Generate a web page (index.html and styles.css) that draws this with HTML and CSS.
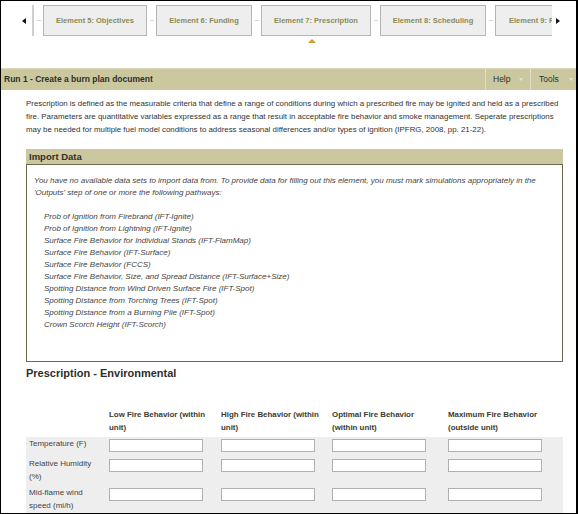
FILE: index.html
```html
<!DOCTYPE html>
<html>
<head>
<meta charset="utf-8">
<link rel="stylesheet" href="styles.css">
</head>
<body>
<div class="frame">
  <div class="tabstrip">
    <span class="arrow-left"></span>
    <span class="vbar"></span>
    <div class="tabs-viewport">
      <span class="dash"></span>
      <div class="tab t5">Element 5: Objectives</div>
      <span class="dash"></span>
      <div class="tab t6">Element 6: Funding</div>
      <span class="dash"></span>
      <div class="tab t7 active">Element 7: Prescription</div>
      <span class="dash"></span>
      <div class="tab t8">Element 8: Scheduling</div>
      <span class="dash"></span>
      <div class="tab t9">Element 9: Public Affairs</div>
    </div>
    <span class="arrow-right"></span>
  </div>

  <div class="runbar">
    <div class="runtitle">Run 1 - Create a burn plan document</div>
    <div class="menu menu-help">Help <span class="caret"></span></div>
    <div class="menu menu-tools">Tools <span class="caret"></span></div>
  </div>

  <div class="content">
    <p class="intro">Prescription is defined as the measurable criteria that define a range of conditions during which a prescribed fire may be ignited and held as a prescribed fire. Parameters are quantitative variables expressed as a range that result in acceptable fire behavior and smoke management. Seperate prescriptions may be needed for multiple fuel model conditions to address seasonal differences and/or types of ignition (IPFRG, 2008, pp. 21-22).</p>

    <div class="import-head">Import Data</div>
    <div class="import-box">
      <p class="import-msg">You have no available data sets to import data from. To provide data for filling out this element, you must mark simulations appropriately in the 'Outputs' step of one or more the following pathways:</p>
      <ul class="pathways">
        <li>Prob of Ignition from Firebrand (IFT-Ignite)</li>
        <li>Prob of Ignition from Lightning (IFT-Ignite)</li>
        <li>Surface Fire Behavior for Individual Stands (IFT-FlamMap)</li>
        <li>Surface Fire Behavior (IFT-Surface)</li>
        <li>Surface Fire Behavior (FCCS)</li>
        <li>Surface Fire Behavior, Size, and Spread Distance (IFT-Surface+Size)</li>
        <li>Spotting Distance from Wind Driven Surface Fire (IFT-Spot)</li>
        <li>Spotting Distance from Torching Trees (IFT-Spot)</li>
        <li>Spotting Distance from a Burning Pile (IFT-Spot)</li>
        <li>Crown Scorch Height (IFT-Scorch)</li>
      </ul>
    </div>

    <h2 class="section-title">Prescription - Environmental</h2>

    <table class="rx">
      <colgroup>
        <col class="c-label"><col class="c-low"><col class="c-high"><col class="c-opt"><col class="c-max">
      </colgroup>
      <thead>
        <tr>
          <th></th>
          <th>Low Fire Behavior (within unit)</th>
          <th>High Fire Behavior (within unit)</th>
          <th>Optimal Fire Behavior (within unit)</th>
          <th>Maximum Fire Behavior (outside unit)</th>
        </tr>
      </thead>
      <tbody>
        <tr>
          <td class="lbl">Temperature (F)</td>
          <td><input type="text"></td>
          <td><input type="text"></td>
          <td><input type="text"></td>
          <td><input type="text"></td>
        </tr>
        <tr>
          <td class="lbl">Relative Humidity (%)</td>
          <td><input type="text"></td>
          <td><input type="text"></td>
          <td><input type="text"></td>
          <td><input type="text"></td>
        </tr>
        <tr>
          <td class="lbl">Mid-flame wind speed (mi/h)</td>
          <td><input type="text"></td>
          <td><input type="text"></td>
          <td><input type="text"></td>
          <td><input type="text"></td>
        </tr>
      </tbody>
    </table>
  </div>
</div>
</body>
</html>
```

FILE: styles.css
```css
html, body {
  margin: 0;
  padding: 0;
  background: #fff;
}

.frame {
  width: 578px;
  height: 514px;
  box-sizing: border-box;
  border: 1px solid #000;
  border-right-width: 2px;
  overflow: hidden;
  font-family: "Liberation Sans", Arial, Helvetica, sans-serif;
  color: #333;
}

/* ---------- tab strip ---------- */
.tabstrip {
  height: 67px;
  box-sizing: border-box;
  padding: 4px 0 0 21px;
  display: flex;
  align-items: flex-start;
}

.arrow-left {
  width: 0;
  height: 0;
  margin-top: 13px;
  border-top: 3px solid transparent;
  border-bottom: 3px solid transparent;
  border-right: 4px solid #111;
}

.vbar {
  width: 2px;
  height: 31px;
  margin-left: 6px;
  background: #cfcfcf;
}

.tabs-viewport {
  width: 518px;
  height: 40px;
  display: flex;
  align-items: flex-start;
  overflow: hidden;
  flex: none;
}

.dash {
  flex: none;
  width: 9px;
  height: 31px;
  position: relative;
}
.dash::before {
  content: "";
  position: absolute;
  left: 3px;
  top: 15px;
  width: 4px;
  height: 1px;
  background: #d6d6d6;
}

.tab {
  flex: none;
  position: relative;
  height: 31px;
  box-sizing: border-box;
  border: 1px solid #b5b5b5;
  background: #eeeeee;
  color: #8c8a58;
  font-weight: bold;
  font-size: 7.5px;
  line-height: 29px;
  text-align: center;
  white-space: nowrap;
  overflow: hidden;
}
.t5 { width: 104px; }
.t6 { width: 96px; }
.t7 { width: 110px; overflow: visible; }
.t8 { width: 106px; }
.t9 { width: 106px; text-align: left; padding-left: 13px; }

.tab.active::after {
  content: "";
  position: absolute;
  left: 50%;
  margin-left: -8px;
  top: 33px;
  width: 0;
  height: 0;
  border-left: 4px solid transparent;
  border-right: 4px solid transparent;
  border-bottom: 4px solid #d39a2a;
}

.arrow-right {
  width: 0;
  height: 0;
  margin-top: 13px;
  margin-left: 4px;
  border-top: 3px solid transparent;
  border-bottom: 3px solid transparent;
  border-left: 4px solid #111;
}

/* ---------- run bar ---------- */
.runbar {
  height: 22px;
  display: flex;
  background: #cbc89f;
  border-top: 1px solid #dcdabb;
  box-sizing: border-box;
}
.runtitle {
  flex: 1;
  padding-left: 3px;
  font-size: 8.5px;
  font-weight: bold;
  line-height: 21px;
  color: #2f2f2a;
}
.menu {
  flex: none;
  box-sizing: border-box;
  border-left: 1px solid #e2e0c6;
  font-size: 8.5px;
  line-height: 21px;
  color: #2f2f2a;
  display: flex;
  align-items: center;
}
.menu-help { width: 45px; padding-left: 7px; }
.menu-tools { width: 46px; padding-left: 8px; }
.caret {
  width: 0;
  height: 0;
  margin-left: 9px;
  border-left: 2.5px solid transparent;
  border-right: 2.5px solid transparent;
  border-top: 3px solid #e6e3c9;
}
.menu-tools .caret { margin-left: 10px; }

/* ---------- content ---------- */
.content {
  padding: 0 13px 0 25px;
}

.intro {
  margin: 7px 0 0;
  font-size: 7.9px;
  line-height: 13px;
  color: #333;
}

.import-head {
  margin-top: 13px;
  height: 15px;
  background: #cbc89f;
  padding-left: 3px;
  font-size: 9.5px;
  font-weight: bold;
  line-height: 15px;
  color: #2f2f2a;
}

.import-box {
  height: 198px;
  box-sizing: border-box;
  border: 1px solid #6b6a4a;
  padding: 10px 8px 0 7px;
  font-style: italic;
  font-size: 8px;
  line-height: 12px;
  color: #444;
}
.import-msg {
  margin: 0 0 12px;
}
.pathways {
  list-style: none;
  margin: 0;
  padding: 0 0 0 10px;
}

.section-title {
  margin: 4px 0 0;
  font-size: 11px;
  line-height: 14px;
  font-weight: bold;
  color: #2f2f2a;
}

.rx {
  margin-top: 29px;
  width: 537px;
  table-layout: fixed;
  border-collapse: collapse;
  font-size: 7.9px;
  color: #333;
}
.c-label { width: 83px; }
.c-low { width: 112px; }
.c-high { width: 111px; }
.c-opt { width: 116px; }
.c-max { width: 115px; }

.rx th {
  text-align: left;
  vertical-align: bottom;
  font-weight: bold;
  line-height: 12.5px;
  padding: 0 8px 3px 0;
  color: #3a3a33;
}
.rx tbody tr {
  background: #eeeeee;
}
.rx td {
  vertical-align: top;
  padding: 2px 0 2px 0;
  line-height: 12.5px;
}
.rx td.lbl {
  padding-left: 3px;
  padding-right: 6px;
  font-size: 8px;
  color: #444;
}
.rx tbody tr:first-child td {
  padding-top: 1px;
  padding-bottom: 4px;
}
.rx input {
  display: block;
  width: 94px;
  height: 13px;
  margin: 1px 0 0;
  padding: 0;
  box-sizing: border-box;
  border: 1px solid #b0b0b0;
  background: #fff;
  font-size: 8px;
}
```
